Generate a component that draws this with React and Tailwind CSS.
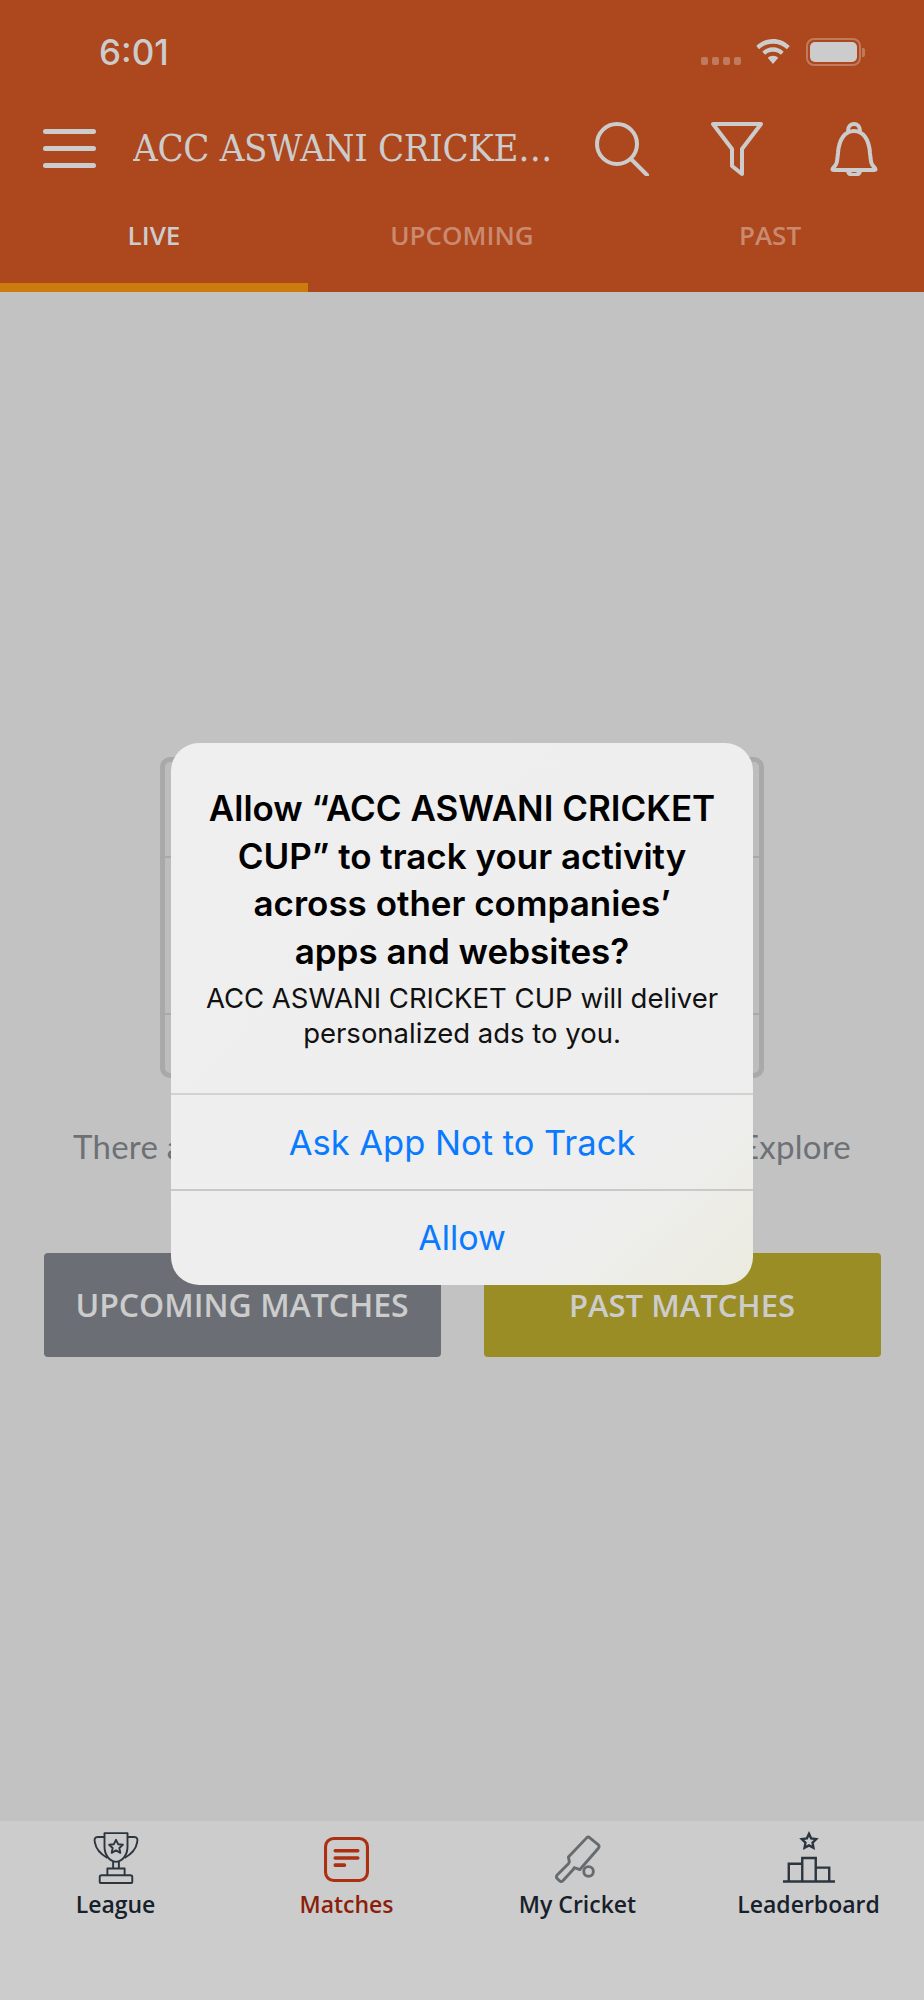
const SANS = "font-['Open_Sans',sans-serif]";

function TrophyIcon() {
  return (
    <svg width="46" height="54" viewBox="0 0 48 56" fill="none" stroke="#2b3640" strokeWidth="2" strokeLinejoin="round">
      <path d="M12 2h24v14c0 9-5 15-12 16-7-1-12-7-12-16z" />
      <path d="M12 6H5c-3 0-4 2-3 6 1 6 6 12 13 16" />
      <path d="M36 6h7c3 0 4 2 3 6-1 6-6 12-13 16" />
      <path d="M24 9l2.200 4.600 5 .6-3.700 3.400 1 5-4.500-2.500-4.500 2.500 1-5-3.700-3.400 5-.6z" />
      <path d="M21 32v7M27 32v7M15 46v-7h18v7M9 46h30q2 0 2 2v5q0 1-1 1H8q-1 0-1-1v-5q0-2 2-2z" />
    </svg>
  );
}

function MatchesIcon() {
  return (
    <svg className="mt-[6px]" width="45" height="45" viewBox="0 0 44 44" fill="none" stroke="#ab2f10" strokeWidth="3" strokeLinecap="round">
      <rect x="1.500" y="1.500" width="41" height="41" rx="8" />
      <path d="M11 13.500h22M11 20.500h22M11 27.500h9" strokeWidth="3.500" />
    </svg>
  );
}

function BatIcon() {
  return (
    <svg className="mt-[4px]" width="48" height="48" viewBox="0 0 48 50" fill="none" stroke="#666b70" strokeWidth="3" strokeLinejoin="round">
      <path d="M35 2l10 8q2 2 0 4L26 36l-6-2-1 2-11 12q-2 1-3 0l-3-3q-1-1 0-3l12-12 1-2-1-5L33 3q1-1 2-1z" />
      <circle cx="35" cy="38" r="5" />
    </svg>
  );
}

function PodiumIcon() {
  return (
    <svg width="52" height="52" viewBox="0 0 54 54" fill="none" stroke="#2b3640" strokeWidth="2.500">
      <path d="M27 3l2.200 4.600 5.300.8-3.800 3.700.9 5.300-4.600-2.500-4.600 2.500.9-5.300-3.800-3.700 5.300-.8z" />
      <path d="M6 52V34h14v18M20 52V28h14v24M34 52V38h14v14M0 52.500h54" />
    </svg>
  );
}

function NavItem({ icon, label, active }) {
  return (
    <div className="flex w-[231px] flex-col items-center">
      <div className="flex h-[58px] items-start justify-center">{icon}</div>
      <span className={`text-[23px] font-semibold leading-[30px] ${active ? 'text-[#8a1f0b]' : 'text-[#17212b]'}`}>{label}</span>
    </div>
  );
}

export default function App() {
  return (
    <div className={`relative flex h-[2000px] w-[924px] flex-col overflow-hidden bg-[#c2c2c2] ${SANS}`}>
      <header className="h-[292px] shrink-0 bg-[#ad471e] text-[#cccccc]">
        <div className="flex h-[104px] items-start justify-between pl-[99px] pr-[59px] pt-[31px]">
          <span className="font-['Inter',sans-serif] text-[35px] font-medium leading-[42px]">6:01</span>
          <div className="flex items-center gap-[6px] pt-[7px]">
            <div className="mr-[7px] mt-[17px] flex gap-[4px]">
              {[0, 1, 2, 3].map(i => <span key={i} className="h-[8px] w-[7px] rounded-[2px] bg-[#c07a5c]" />)}
            </div>
            <svg width="38" height="26" viewBox="0 0 36 28" fill="#cccccc">
              <path d="M18 0c7 0 13 2.700 18 7.500l-3 3.500C29 7 24 5 18 5S7 7 3 11L0 7.500C5 2.700 11 0 18 0z" />
              <path d="M18 9c4.500 0 8.500 1.800 11.500 4.700l-3 3.300c-2.300-2-5.200-3.300-8.500-3.300s-6.200 1.300-8.500 3.300l-3-3.300C9.500 10.800 13.500 9 18 9z" />
              <path d="M18 18c2.300 0 4.200.8 5.700 2.200L18 27l-5.700-6.800c1.500-1.400 3.400-2.200 5.700-2.200z" />
            </svg>
            <div className="ml-[8px] flex items-center">
              <div className="h-[28px] w-[55px] rounded-[8px] border-2 border-[#c07a5c] p-[2px]">
                <div className="h-full w-full rounded-[5px] bg-[#cccccc]" />
              </div>
              <span className="ml-[1px] h-[9px] w-[3px] rounded-r-[2px] bg-[#c07a5c]" />
            </div>
          </div>
        </div>
        <div className="flex h-[86px] items-center pl-[43px]">
          <div className="mt-[2px] flex w-[53px] flex-col gap-[12px]">
            {[0, 1, 2].map(i => <span key={i} className="h-[5px] rounded-full bg-[#cccccc]" />)}
          </div>
          <h1 className="ml-[37px] mt-[2px] w-[424px] truncate font-['DejaVu_Serif_Condensed','DejaVu_Serif',serif] text-[38px] font-normal leading-[46px] tracking-[-0.3px]">ACC ASWANI CRICKET CUP</h1>
          <svg className="ml-[38px] mt-[4px]" width="54" height="54" viewBox="0 0 54 54" fill="none" stroke="#cccccc" strokeWidth="4" strokeLinecap="round">
            <circle cx="22" cy="22" r="20" />
            <path d="M36 37l16 16" />
          </svg>
          <svg className="ml-[62px] mt-[4px]" width="52" height="54" viewBox="0 0 52 54" fill="none" stroke="#cccccc" strokeWidth="4" strokeLinejoin="round">
            <path d="M2 2h48L31 27v25l-10-8V27z" />
          </svg>
          <svg className="ml-[67px] mt-[4px]" width="48" height="54" viewBox="0 0 48 54" fill="none" stroke="#cccccc" strokeWidth="4" strokeLinejoin="round">
            <path d="M4 45c3-3 3-5 4-14 1-14 7-22 16-22s15 8 16 22c1 9 1 11 4 14 2 2 2 3 0 3H4c-2 0-2-1 0-3z" />
            <path d="M18 9c0-5 3-7 6-7s6 2 6 7M18 48c0 4 3 5 6 5s6-1 6-5" />
          </svg>
        </div>
        <div className="relative flex h-[102px] pt-[22px]">
          {['LIVE', 'UPCOMING', 'PAST'].map((tab, i) => (
            <div key={tab} className={`flex h-[46px] flex-1 items-center justify-center text-[26px] font-semibold ${i === 0 ? 'text-[#cccccc]' : 'text-[#c98a6f]'}`}>{tab}</div>
          ))}
          <div className="absolute bottom-0 left-0 h-[9px] w-[308px] bg-[#cc7c0c]" />
        </div>
      </header>

      <main className="flex flex-1 flex-col items-center">
        <div className="mt-[465px] h-[321px] w-[604px] rounded-[10px] border-[5px] border-[#a9a9a9] bg-[#bdbdbd]">
          <div className="mt-[94px] h-[159px] border-y-2 border-[#a9a9a9]" />
        </div>
        <p className="mt-[46px] whitespace-nowrap text-center font-['Lato',sans-serif] text-[33px] leading-[44px] tracking-[0.23px] text-[#6d7176]">There are no live matches to show right now. Explore</p>
        <div className="mt-[85px] flex gap-[43px]">
          <button className="flex h-[104px] w-[397px] items-center justify-center rounded-[4px] bg-[#6b6f75] text-[32px] font-semibold text-[#cccccc]">UPCOMING MATCHES</button>
          <button className="flex h-[104px] w-[397px] items-center justify-center rounded-[4px] bg-[#9a8d25] text-[31px] font-semibold text-[#cccccc]">PAST MATCHES</button>
        </div>
      </main>

      <nav className="flex h-[179px] shrink-0 bg-[#cccccc] pt-[10px]">
        <NavItem icon={<TrophyIcon />} label="League" />
        <NavItem icon={<MatchesIcon />} label="Matches" active />
        <NavItem icon={<BatIcon />} label="My Cricket" />
        <NavItem icon={<PodiumIcon />} label="Leaderboard" />
      </nav>

      <div className="absolute left-[171px] top-[743px] w-[582px] overflow-hidden rounded-[28px] bg-gradient-to-br from-[#efefef] via-[#eeeeee] via-80% to-[#ecebe0] text-center font-['Inter',sans-serif]">
        <div className="h-[350px] px-[30px] pt-[42px]">
          <h2 className="text-[35px] font-semibold leading-[47.5px] text-black">
            Allow “ACC ASWANI CRICKET CUP” to track your activity across other companies’<br />apps and websites?
          </h2>
          <p className="mt-[6px] text-[27.5px] leading-[35px] text-[#111111]">ACC ASWANI CRICKET CUP will deliver personalized ads to you.</p>
        </div>
        <div className="flex h-[96px] items-center justify-center border-t-2 border-[#d2d2d2] pt-[2px] text-[34.500px] leading-none text-[#0a7aff]">Ask App Not to Track</div>
        <div className="flex h-[96px] items-center justify-center border-t-2 border-[#c9c9c9] text-[34px] leading-none text-[#0a7aff]">Allow</div>
      </div>
    </div>
  );
}
